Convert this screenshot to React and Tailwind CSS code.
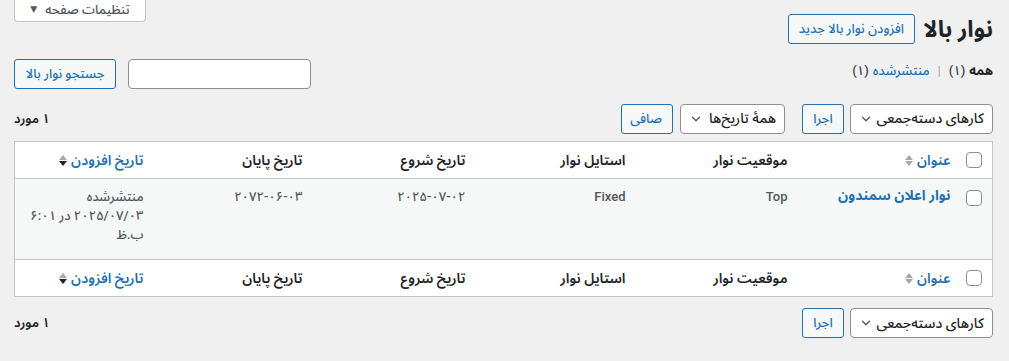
import React from 'react';
import { ChevronDown } from 'lucide-react';

const FONT = { fontFamily: 'Roboto, "Noto Sans Arabic", "Vazirmatn", "DejaVu Sans", sans-serif' };

// Small sort arrows (up + down triangles)
const SortArrows = ({ active = false }) => (
  <span className="inline-flex flex-col items-center gap-[1px] mr-1">
    <svg width="8" height="5" viewBox="0 0 8 5"><path d="M4 0L8 5H0z" fill="#a7aaad" /></svg>
    <svg width="8" height="5" viewBox="0 0 8 5"><path d="M0 0h8L4 5z" fill={active ? '#1d2327' : '#a7aaad'} /></svg>
  </span>
);

const Checkbox = () => (
  <span className="block w-4 h-4 rounded-[4px] border border-[#8c8f94] bg-white" />
);

const FakeSelect = ({ label, width }) => (
  <div className={`h-[30px] ${width} flex items-center justify-between pr-2 pl-2 rounded-[4px] border border-[#8c8f94] bg-white text-[14px] font-medium whitespace-nowrap text-[#1d2327]`}>
    <span>{label}</span>
    <ChevronDown size={14} strokeWidth={2.2} className="text-[#50575e]" />
  </div>
);

const SecondaryButton = ({ children, className = '' }) => (
  <button className={`h-[30px] px-[10px] rounded-[3px] border border-[#2271b1] bg-[#f6f7f7] text-[13px] font-medium whitespace-nowrap text-[#2271b1] ${className}`}>
    {children}
  </button>
);

const HeaderRow = () => (
  <tr className="h-[37px] text-[14px] text-[#1d2327]">
    <td className="w-[34px] pr-[10px] align-middle"><Checkbox /></td>
    <th className="w-[163px] px-[8px] text-right font-semibold">
      <span className="inline-flex items-center text-[#2271b1]">عنوان<SortArrows /></span>
    </th>
    <th className="w-[162px] px-[8px] text-right font-semibold">موقعیت نوار</th>
    <th className="w-[160px] px-[8px] text-right font-semibold">استایل نوار</th>
    <th className="w-[163px] px-[8px] text-right font-semibold">تاریخ شروع</th>
    <th className="w-[159px] px-[8px] text-right font-semibold">تاریخ پایان</th>
    <th className="px-[8px] text-right font-semibold">
      <span className="inline-flex items-center text-[#2271b1]">تاریخ افزودن<SortArrows active /></span>
    </th>
  </tr>
);

const BulkActions = () => (
  <div className="flex items-center gap-[6px]">
    <FakeSelect label="کارهای دسته‌جمعی" width="w-[143px]" />
    <SecondaryButton className="w-[42px] px-0">اجرا</SecondaryButton>
  </div>
);

export default function App() {
  return (
    <div dir="rtl" style={FONT} className="w-[1009px] h-[361px] bg-[#f0f0f1] overflow-hidden pr-[16px] pl-[14px] text-[#3c434a]">
      {/* screen options tab */}
      <div className="flex justify-end">
        <button className="h-[24px] w-[132px] -mt-[2px] flex items-center justify-center gap-2 border border-t-0 border-[#c3c4c7] rounded-b-[4px] bg-white text-[13px] font-medium text-[#50575e]">
          <span>تنظیمات صفحه</span>
          <span className="text-[9px]">▼</span>
        </button>
      </div>

      {/* heading */}
      <div className="flex items-center gap-[8px] -mt-[8px] h-[30px]">
        <h1 className="text-[23px] font-bold text-[#1d2327] leading-none">نوار بالا</h1>
        <SecondaryButton className="w-[127px] px-0">افزودن نوار بالا جدید</SecondaryButton>
      </div>

      {/* views + search */}
      <div className="flex justify-between items-start mt-[15px] h-[30px]">
        <div className="text-[13px] font-medium mt-[2px] flex items-center gap-1">
          <span className="font-bold text-[#1d2327]">همه</span>
          <span className="text-[#3c434a]">(۱)</span>
          <span className="text-[#a7aaad] mx-1">|</span>
          <span className="text-[#2271b1]">منتشرشده</span>
          <span className="text-[#3c434a]">(۱)</span>
        </div>
        <div className="flex items-center gap-[12px]">
          <div className="w-[183px] h-[30px] rounded-[4px] border border-[#8c8f94] bg-white" />
          <SecondaryButton className="w-[102px] px-0">جستجو نوار بالا</SecondaryButton>
        </div>
      </div>

      {/* top tablenav */}
      <div className="flex items-center justify-between mt-[14px] h-[31px]">
        <div className="flex items-center">
          <BulkActions />
          <div className="flex items-center gap-[7px] mr-[17px]">
            <FakeSelect label="همهٔ تاریخ‌ها" width="w-[105px]" />
            <SecondaryButton className="w-[52px] px-0">صافی</SecondaryButton>
          </div>
        </div>
        <span className="text-[13px] font-semibold text-[#1d2327]">۱ مورد</span>
      </div>

      {/* table */}
      <table className="mt-[7px] w-full border border-[#c3c4c7] bg-white border-collapse table-fixed">
        <thead className="border-b border-[#c3c4c7]">
          <HeaderRow />
        </thead>
        <tbody>
          <tr className="h-[81px] bg-[#f6f7f7] align-top text-[13px] font-medium text-[#50575e]">
            <td className="pr-[10px] pt-[11px]"><Checkbox /></td>
            <td className="px-[8px] pt-[6px]">
              <span className="text-[14px] font-bold text-[#2271b1]">نوار اعلان سمندون</span>
            </td>
            <td className="px-[8px] pt-[8px]">Top</td>
            <td className="px-[8px] pt-[8px]">Fixed</td>
            <td className="px-[8px] pt-[8px]">۲۰۲۵-۰۷-۰۲</td>
            <td className="px-[8px] pt-[8px]">۲۰۷۲-۰۶-۰۳</td>
            <td className="px-[8px] pt-[8px] leading-[19px]">
              منتشرشده
              <br />
              ۲۰۲۵/۰۷/۰۳ در ۶:۰۱ ب.ظ
            </td>
          </tr>
        </tbody>
        <tfoot className="border-t border-[#c3c4c7]">
          <HeaderRow />
        </tfoot>
      </table>

      {/* bottom tablenav */}
      <div className="flex items-center justify-between mt-[11px] h-[30px]">
        <BulkActions />
        <span className="text-[13px] font-semibold text-[#1d2327]">۱ مورد</span>
      </div>
    </div>
  );
}
